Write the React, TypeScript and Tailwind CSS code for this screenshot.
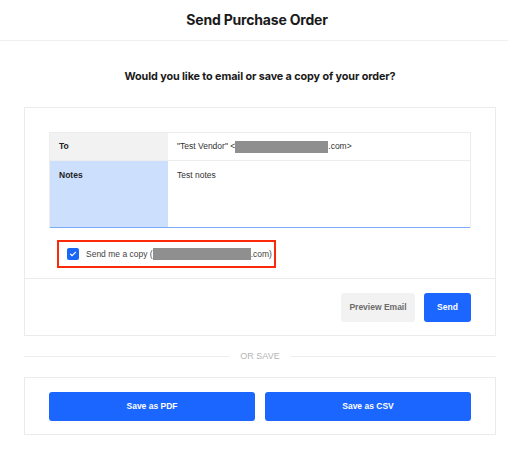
import React from "react";

const body = { fontFamily: '"Liberation Sans", Arial, sans-serif' };
const head = { fontFamily: 'Inter, "Liberation Sans", sans-serif' };

function Blur({ w }: { w: number }) {
  return <span className="inline-block h-[12px] bg-[#8f8f8f]" style={{ width: w }} />;
}

export default function App() {
  return (
    <div className="w-[508px] h-[449px] bg-white text-[#1a1a1a]" style={body}>
      <div className="h-[41px] border-b border-[#f0f0f0] flex items-center justify-center">
        <h1 className="text-[14px] font-bold tracking-[-0.2px] pb-[2px] pl-[6px]" style={head}>
          Send Purchase Order
        </h1>
      </div>
      <div className="h-[66px] flex items-center justify-center">
        <p className="text-[10.8px] font-bold tracking-[-0.1px] pt-[7px] pl-[12px]" style={head}>
          Would you like to email or save a copy of your order?
        </p>
      </div>

      <div className="ml-[24px] w-[472px] border border-[#ebebeb]">
        <div className="px-[24px] pt-[24px] pb-[10px]">
          <div className="border border-[#ececec] border-b-0">
            <div className="flex h-[28px] border-b border-[#ececec]">
              <div className="w-[118px] bg-[#f2f2f2] flex items-center pl-[9px] text-[8.5px] font-bold text-[#222]">
                To
              </div>
              <div className="flex-1 flex items-center pl-[9px] text-[8.5px] text-[#333]">
                <span>"Test Vendor" &lt;</span>
                <Blur w={93} />
                <span>.com&gt;</span>
              </div>
            </div>
            <div className="flex h-[67px] border-b-[1.5px] border-[#7aa9f5]">
              <div className="w-[118px] bg-[#cce0fd] pl-[9px] pt-[8px] text-[8.5px] font-bold text-[#222]">
                Notes
              </div>
              <div className="flex-1 pl-[9px] pt-[8px] text-[8.5px] text-[#333]">Test notes</div>
            </div>
          </div>
          <div className="mt-[12px] ml-[8px] w-[219px] h-[28px] border-2 border-[#fa2a0a] flex items-center pl-[8px]">
            <span className="w-[12px] h-[12px] rounded-[2px] bg-[#1a66f5] flex items-center justify-center">
              <svg width="8" height="8" viewBox="0 0 8 8" fill="none">
                <path d="M1.6 4.2 L3.2 5.7 L6.4 2.3" stroke="white" strokeWidth="1.2" strokeLinecap="round" strokeLinejoin="round" />
              </svg>
            </span>
            <span className="ml-[7px] text-[8.5px] text-[#444] flex items-center">
              <span>Send me a copy (</span>
              <Blur w={98} />
              <span>.com)</span>
            </span>
          </div>
        </div>
        <div className="border-t border-[#ebebeb] h-[57px] flex items-center justify-end pr-[24px] gap-[9px]">
          <button className="w-[74px] h-[29px] rounded-[3px] bg-[#f2f2f2] text-[8.5px] font-bold text-[#6b6b6b]">
            Preview Email
          </button>
          <button className="w-[47px] h-[29px] rounded-[3px] bg-[#1a66ff] text-[8.5px] font-bold text-white">
            Send
          </button>
        </div>
      </div>

      <div className="ml-[24px] w-[472px] h-[41px] flex items-center">
        <div className="flex-1 h-px bg-[#eeeeee]" />
        <span className="px-[10px] text-[9px] text-[#b5b5b5]">OR SAVE</span>
        <div className="flex-1 h-px bg-[#eeeeee]" />
      </div>

      <div className="ml-[24px] w-[472px] h-[58px] border border-[#ebebeb] flex items-center px-[24px] gap-[10px]">
        <button className="flex-1 h-[29px] rounded-[3px] bg-[#1a66ff] text-[8.5px] font-bold text-white">
          Save as PDF
        </button>
        <button className="flex-1 h-[29px] rounded-[3px] bg-[#1a66ff] text-[8.5px] font-bold text-white">
          Save as CSV
        </button>
      </div>
    </div>
  );
}
